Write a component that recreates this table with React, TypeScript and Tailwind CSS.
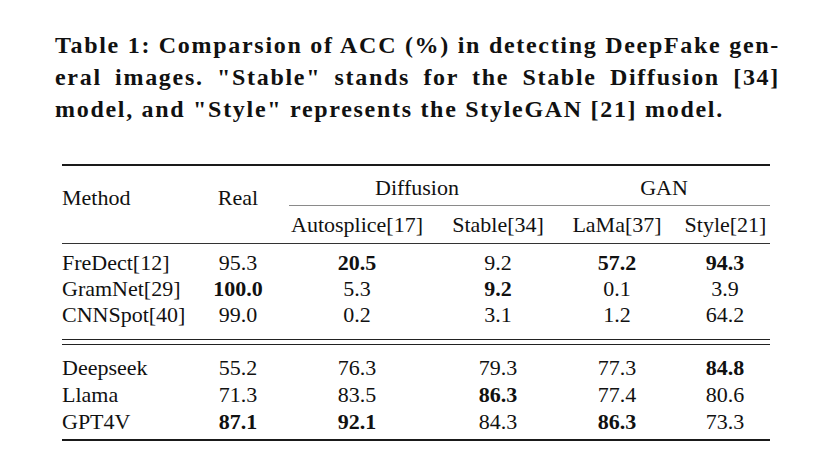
type Cell = { v: string; b?: boolean };

const top: { m: string; r: Cell[] }[] = [
  { m: "FreDect[12]", r: [{ v: "95.3" }, { v: "20.5", b: true }, { v: "9.2" }, { v: "57.2", b: true }, { v: "94.3", b: true }] },
  { m: "GramNet[29]", r: [{ v: "100.0", b: true }, { v: "5.3" }, { v: "9.2", b: true }, { v: "0.1" }, { v: "3.9" }] },
  { m: "CNNSpot[40]", r: [{ v: "99.0" }, { v: "0.2" }, { v: "3.1" }, { v: "1.2" }, { v: "64.2" }] },
];

const bottom: { m: string; r: Cell[] }[] = [
  { m: "Deepseek", r: [{ v: "55.2" }, { v: "76.3" }, { v: "79.3" }, { v: "77.3" }, { v: "84.8", b: true }] },
  { m: "Llama", r: [{ v: "71.3" }, { v: "83.5" }, { v: "86.3", b: true }, { v: "77.4" }, { v: "80.6" }] },
  { m: "GPT4V", r: [{ v: "87.1", b: true }, { v: "92.1", b: true }, { v: "84.3" }, { v: "86.3", b: true }, { v: "73.3" }] },
];

const cols = "grid grid-cols-[138px_76px_162px_120px_118px_94px]";

const Row = ({ m, r, h }: { m: string; r: Cell[]; h: string }) => (
  <div className={`${cols} ${h} items-center`}>
    <div className="text-left">{m}</div>
    {r.map((c, i) => (
      <div key={i} className={`text-center ${c.b ? "font-bold" : ""} ${i === 4 ? "pl-[4px]" : ""}`}>
        {c.v}
      </div>
    ))}
  </div>
);

export default function App() {
  return (
    <div className="w-[830px] h-[471px] bg-white text-[#111] overflow-hidden font-['Liberation_Serif','Times_New_Roman',serif]">
      {/* caption */}
      <div className="pt-[29px] pl-[55px] w-[780px] text-[24px] leading-[32px] font-bold tracking-[1.7px]">
        <div className="text-justify [text-align-last:justify]">
          Table 1: Comparsion of ACC (%) in detecting DeepFake gen-
        </div>
        <div className="text-justify [text-align-last:justify]">
          eral images. "Stable" stands for the Stable Diffusion [34]
        </div>
        <div>model, and "Style" represents the StyleGAN [21] model.</div>
      </div>

      {/* table */}
      <div className="mt-[39px] ml-[62px] w-[708px] text-[22px] leading-[26px]">
        <div className="h-[2px] bg-[#1a1a1a]" />
        <div className={`${cols} grid-rows-[39px_38px]`}>
          <div className="row-span-2 pt-[19px]">Method</div>
          <div className="row-span-2 pt-[19px] text-center">Real</div>
          <div className="col-span-2 pt-[9px] text-center">Diffusion</div>
          <div className="col-span-2 pt-[9px] text-center">GAN</div>
          <div className="col-span-4 row-start-2 col-start-3 border-t border-[#8a8a8a] ml-[13px] pt-[6px] grid grid-cols-[149px_120px_118px_94px]">
            <div className="text-center -ml-[13px]">Autosplice[17]</div>
            <div className="text-center">Stable[34]</div>
            <div className="text-center">LaMa[37]</div>
            <div className="text-center pl-[5px]">Style[21]</div>
          </div>
        </div>
        <div className="h-[1px] bg-[#333]" />
        <div className="pt-[6px] pb-[11px]">
          {top.map((row) => (
            <Row key={row.m} m={row.m} r={row.r} h="h-[26px]" />
          ))}
        </div>
        <div className="h-[1px] bg-[#222]" />
        <div className="h-[4px]" />
        <div className="h-[1px] bg-[#222]" />
        <div className="pt-[9px] pb-[4px]">
          {bottom.map((row) => (
            <Row key={row.m} m={row.m} r={row.r} h="h-[27px]" />
          ))}
        </div>
        <div className="h-[2px] bg-[#1a1a1a]" />
      </div>
    </div>
  );
}
